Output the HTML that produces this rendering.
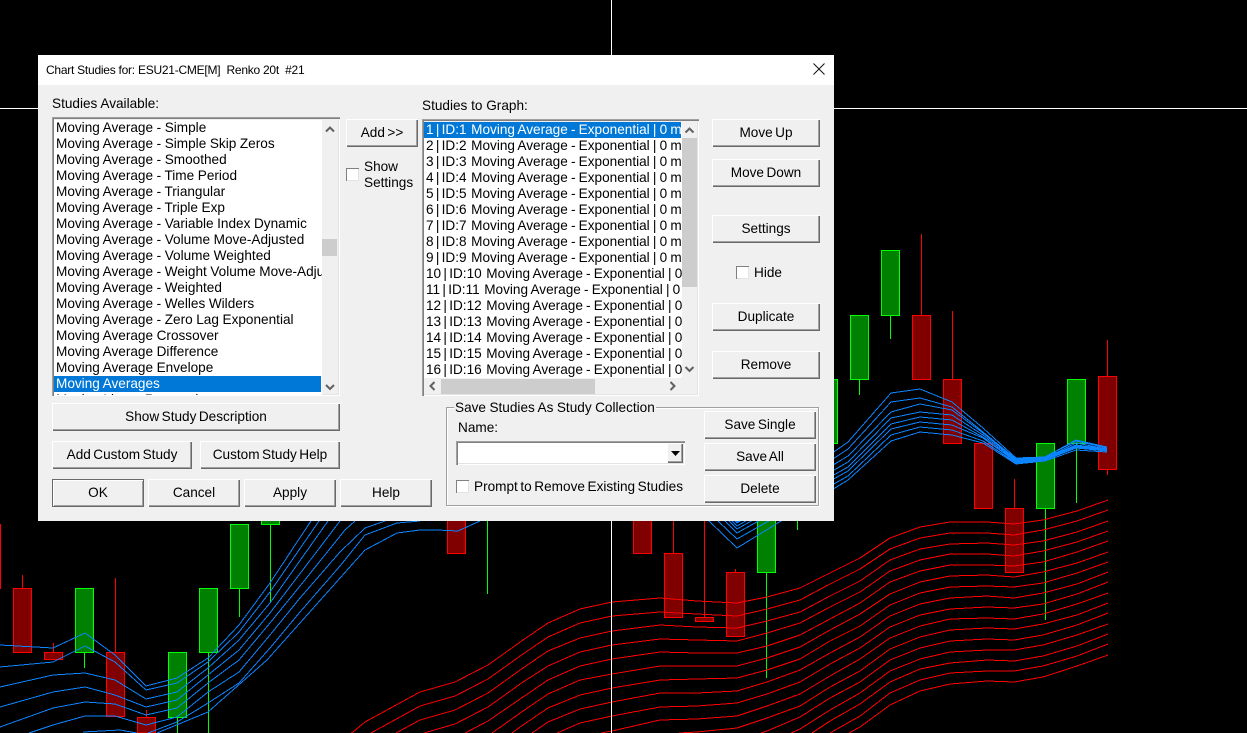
<!DOCTYPE html>
<html>
<head>
<meta charset="utf-8">
<title>Chart Studies</title>
<style>
html,body{margin:0;padding:0;background:#000;width:1247px;height:733px;overflow:hidden}
body{position:relative;font-family:"Liberation Sans",Arial,sans-serif;font-size:13.6px;color:#000}
svg{position:absolute;left:0;top:0}
#dlg{position:absolute;left:38px;top:55px;width:796px;height:466px;background:#f0f0f0}
#ttl{position:absolute;left:38px;top:55px;width:796px;height:30px;background:#fff}
.a{position:absolute;white-space:pre;line-height:16px}
.b{position:absolute;background:#f0f0f0;text-align:center;box-sizing:border-box;line-height:27px;white-space:pre;word-spacing:-1.3px;box-shadow:inset 1px 1px 0 #fff,inset -1px -1px 0 #696969,inset -2px -2px 0 #a0a0a0}
.d{box-shadow:inset 0 0 0 1px #696969,inset 2px 2px 0 #fff,inset -2px -2px 0 #a0a0a0}
.s{position:absolute;box-sizing:border-box;background:#f0f0f0;box-shadow:inset 1px 1px 0 #a0a0a0,inset 2px 2px 0 #808080,inset -1px -1px 0 #fff,inset -2px -2px 0 #e3e3e3}
.l{position:absolute;background:#fff;overflow:hidden}
.l div{height:16px;line-height:16px;white-space:pre;padding-left:2px;word-spacing:-.2px}
.l .x{background:#0078d7;color:#fff}
.m div{word-spacing:-.6px}
.m span{word-spacing:-1.5px}
.t{position:absolute;background:#cdcdcd}
.c{position:absolute;box-sizing:border-box;width:13px;height:13px;background:#fff;box-shadow:inset 1px 1px 0 #808080,inset -1px -1px 0 #e3e3e3}
#g{position:absolute;left:446px;top:407px;width:373px;height:99px;box-sizing:border-box;border:1px solid #a0a0a0;box-shadow:1px 1px 0 #fff,inset 1px 1px 0 #fff}
</style>
</head>
<body>
<svg id="chart" width="1247" height="733" viewBox="0 0 1247 733" shape-rendering="crispEdges" xmlns="http://www.w3.org/2000/svg">
<g fill="#800000" stroke="#ff0000">
<path fill="none" d="M.5 524V589M22.5 575V588M53.5 643V652M115.5 578V652M146.5 710V717M673.5 521V553M704.5 521V617M735.5 569V572M921.5 234V315M952.5 311V379M1014.5 479V508M1107.5 340V376M1107.5 469V475"/>
<rect x="13.5" y="588.5" width="18" height="64"/>
<rect x="44.5" y="652.5" width="18" height="7"/>
<rect x="106.5" y="652.5" width="18" height="64"/>
<path d="M137.5 733V717.5H155.5V733Z"/>
<rect x="447.5" y="500.5" width="18" height="53"/>
<rect x="633.5" y="500.5" width="18" height="53"/>
<rect x="664.5" y="553.5" width="18" height="64"/>
<rect x="695.5" y="617.5" width="18" height="4"/>
<rect x="726.5" y="572.5" width="18" height="64"/>
<rect x="912.5" y="315.5" width="18" height="64"/>
<rect x="943.5" y="379.5" width="18" height="64"/>
<rect x="974.5" y="443.5" width="18" height="65"/>
<rect x="1005.5" y="508.5" width="18" height="64"/>
<rect x="1098.5" y="376.5" width="18" height="93"/>
</g>
<g fill="#008000" stroke="#00ff00">
<path fill="none" d="M84.5 652V668M177.5 717V733M208.5 652V733M239.5 588V617M270.5 524V603M487.5 510V594M766.5 572V678M797.5 500V530M859.5 379V395M890.5 315V339M1045.5 508V620M1076.5 443V503"/>
<rect x="75.5" y="588.5" width="18" height="64"/>
<rect x="168.5" y="652.5" width="18" height="65"/>
<rect x="199.5" y="588.5" width="18" height="64"/>
<rect x="230.5" y="524.5" width="18" height="64"/>
<rect x="261.5" y="500.5" width="18" height="24"/>
<rect x="757.5" y="500.5" width="18" height="72"/>
<rect x="819.5" y="379.5" width="18" height="64"/>
<rect x="850.5" y="315.5" width="18" height="64"/>
<rect x="881.5" y="250.5" width="18" height="65"/>
<rect x="1036.5" y="443.5" width="18" height="65"/>
<rect x="1067.5" y="379.5" width="18" height="64"/>
</g>
<g id="red" fill="none" stroke="#ff0000"></g>
<g id="blue" fill="none" stroke="#0a84ff">
<polyline points="0,645 53,648 85,633 115,655 146,686 177,678 208,658 239,625 270,583 311,521"/>
<polyline points="0,667 53,662 85,646 115,662 146,690 177,683 208,662 239,632 270,592 319,521"/>
<polyline points="0,687 53,675 85,673 115,680 146,699 177,692 208,668 239,640 270,603 328,521"/>
<polyline points="0,707 53,692 85,687 115,695 146,707 177,700 208,675 239,650 270,613 340,521"/>
<polyline points="0,727 53,708 85,702 115,704 146,715 177,708 208,683 239,660 270,623 300,586 345,530 355,521"/>
<polyline points="29,733 53,725 85,716 115,716 146,725 177,717 208,692 239,672 270,635 300,598 340,552 365,528 385,521"/>
<polyline points="83,732 120,730 137,733"/>
<polyline points="148,733 177,722 208,703 239,683 270,648 300,612 340,566 365,535 397,523 420,521"/>
<polyline points="157,733 208,712 267,660 365,550 397,533 420,530 437,530 458,531 480,521"/>
</g>
<path d="M611.5 0V733M0 108.5H1247" stroke="#fff" fill="none"/>
</svg>
<script>
(function(){
var NS="http://www.w3.org/2000/svg";
function add(g,pts){var p=document.createElementNS(NS,"polyline");p.setAttribute("points",pts.map(function(a){return a[0]+","+a[1]}).join(" "));g.appendChild(p)}
function clip(pts){var o=[];for(var i=0;i<pts.length;i++){var c=pts[i];if(c[1]<=733){if(!o.length&&i>0){var q=pts[i-1];var t=(q[1]-733)/(q[1]-c[1]);o.push([Math.round(q[0]+(c[0]-q[0])*t),733])}o.push(c)}}return o}
var base=[[320,750],[353,732],[365,722],[420,692],[455,682],[488,665],[523,640],[548,623],[580,609],[612,602],[660,598],[697,601],[737,603],[767,597],[800,588],[830,573],[860,558],[890,538],[920,527],[950,522],[987,522],[1014,524],[1043,520],[1077,511],[1108,500]];
var sp=[[320,14],[420,14],[612,14.3],[737,12.5],[830,11.4],[1014,10.5],[1108,10.3]];
function spacing(x){for(var i=1;i<sp.length;i++){if(x<=sp[i][0]){var a=sp[i-1],b=sp[i];return a[1]+(b[1]-a[1])*(x-a[0])/(b[0]-a[0])}}return 10}
var r=document.getElementById("red");
for(var k=0;k<16;k++){var pl=clip(base.map(function(p){return [p[0],Math.round(p[1]+k*spacing(p[0]))]}));if(pl.length>1)add(r,pl)}
var xs=[737,848,891,920,952,983,1016,1045,1076,1107];
var ys=[[520,522,523,526,529,533,539,548],[442,449,456,462,467,471,476,480],[393,402,412,418,424,429,435,441],[389,398,404,412,417,422,427,432],[402,407,410,415,420,425,430,435],[428,432,433,435,437,438,441,443],[458,459,460,461,462,462,463,464],[457,457,458,458,459,459,460,461],[440,441,443,445,446,447,448,450],[447,448,449,449,450,450,451,452]];
var bl=document.getElementById("blue");
for(var j=0;j<8;j++){var pts=[[Math.round(737-(ys[0][j]-521)*1.04),521]];for(var i=0;i<xs.length;i++)pts.push([xs[i],ys[i][j]]);add(bl,pts)}
})();
</script>

<div id="dlg"></div>
<div id="ttl"></div>
<div class="a" style="left:46px;top:62px;font-size:12px;letter-spacing:-.25px">Chart Studies for: ESU21-CME[M]  Renko 20t  #21</div>

<div class="a" style="left:52px;top:96px">Studies Available:</div>
<div class="a" style="left:422px;top:98px">Studies to Graph:</div>

<div class="s" style="left:52px;top:117px;width:288px;height:279px"></div>
<div class="l" style="left:54px;top:120px;width:268px;height:275px">
<div>Moving Average - Simple</div>
<div>Moving Average - Simple Skip Zeros</div>
<div>Moving Average - Smoothed</div>
<div>Moving Average - Time Period</div>
<div>Moving Average - Triangular</div>
<div>Moving Average - Triple Exp</div>
<div>Moving Average - Variable Index Dynamic</div>
<div>Moving Average - Volume Move-Adjusted</div>
<div>Moving Average - Volume Weighted</div>
<div>Moving Average - Weight Volume Move-Adjusted</div>
<div>Moving Average - Weighted</div>
<div>Moving Average - Welles Wilders</div>
<div>Moving Average - Zero Lag Exponential</div>
<div>Moving Average Crossover</div>
<div>Moving Average Difference</div>
<div>Moving Average Envelope</div>
<div class="x" style="width:265px">Moving Averages</div>
<div>Moving Linear Regression</div>
</div>
<div class="t" style="left:322px;top:239px;width:15px;height:17px"></div>

<div class="s" style="left:422px;top:119px;width:277px;height:277px"></div>
<div class="l m" style="left:424px;top:122px;width:258px;height:256px">
<div class="x" style="width:255px"><span>1 | ID:1  </span>Moving Average - Exponential | 0 m</div>
<div><span>2 | ID:2  </span>Moving Average - Exponential | 0 m</div>
<div><span>3 | ID:3  </span>Moving Average - Exponential | 0 m</div>
<div><span>4 | ID:4  </span>Moving Average - Exponential | 0 m</div>
<div><span>5 | ID:5  </span>Moving Average - Exponential | 0 m</div>
<div><span>6 | ID:6  </span>Moving Average - Exponential | 0 m</div>
<div><span>7 | ID:7  </span>Moving Average - Exponential | 0 m</div>
<div><span>8 | ID:8  </span>Moving Average - Exponential | 0 m</div>
<div><span>9 | ID:9  </span>Moving Average - Exponential | 0 m</div>
<div><span>10 | ID:10  </span>Moving Average - Exponential | 0</div>
<div><span>11 | ID:11  </span>Moving Average - Exponential | 0</div>
<div><span>12 | ID:12  </span>Moving Average - Exponential | 0</div>
<div><span>13 | ID:13  </span>Moving Average - Exponential | 0</div>
<div><span>14 | ID:14  </span>Moving Average - Exponential | 0</div>
<div><span>15 | ID:15  </span>Moving Average - Exponential | 0</div>
<div><span>16 | ID:16  </span>Moving Average - Exponential | 0</div>
</div>
<div class="t" style="left:682px;top:138px;width:15px;height:149px"></div>
<div class="t" style="left:441px;top:379px;width:154px;height:15px"></div>

<div class="b" style="left:346px;top:119px;width:72px;height:28px">Add &gt;&gt;</div>
<div class="c" style="left:346px;top:168px"></div>
<div class="a" style="left:364px;top:159px">Show</div>
<div class="a" style="left:364px;top:175px">Settings</div>

<div class="b" style="left:712px;top:119px;width:108px;height:28px">Move Up</div>
<div class="b" style="left:712px;top:159px;width:108px;height:28px">Move Down</div>
<div class="b" style="left:712px;top:215px;width:108px;height:28px">Settings</div>
<div class="c" style="left:736px;top:266px"></div>
<div class="a" style="left:754px;top:265px">Hide</div>
<div class="b" style="left:712px;top:303px;width:108px;height:28px">Duplicate</div>
<div class="b" style="left:712px;top:351px;width:108px;height:28px">Remove</div>

<div class="b" style="left:52px;top:403px;width:288px;height:28px">Show Study Description</div>
<div class="b" style="left:52px;top:441px;width:140px;height:28px">Add Custom Study</div>
<div class="b" style="left:200px;top:441px;width:140px;height:28px">Custom Study Help</div>
<div class="b d" style="left:52px;top:479px;width:92px;height:28px">OK</div>
<div class="b" style="left:148px;top:479px;width:92px;height:28px">Cancel</div>
<div class="b" style="left:244px;top:479px;width:92px;height:28px">Apply</div>
<div class="b" style="left:340px;top:479px;width:92px;height:28px">Help</div>

<div id="g"></div>
<div class="a" style="left:454px;top:400px;background:#f0f0f0;padding:0 1px;word-spacing:-.3px">Save Studies As Study Collection</div>
<div class="a" style="left:458px;top:420px">Name:</div>
<div class="s" style="left:456px;top:441px;width:229px;height:24px;background:#fff"></div>
<div class="b" style="left:667px;top:443px;width:16px;height:20px"></div>
<div class="c" style="left:456px;top:480px"></div>
<div class="a" style="left:474px;top:479px;word-spacing:-1.2px">Prompt to Remove Existing Studies</div>
<div class="b" style="left:704px;top:411px;width:112px;height:28px">Save Single</div>
<div class="b" style="left:704px;top:443px;width:112px;height:28px">Save All</div>
<div class="b" style="left:704px;top:475px;width:112px;height:28px">Delete</div>

<svg width="1247" height="733" viewBox="0 0 1247 733" xmlns="http://www.w3.org/2000/svg">
<path d="M813.5 63.5L824.5 74.5M824.5 63.5L813.5 74.5" stroke="#111" stroke-width="1" fill="none"/>
<g fill="none" stroke="#606060" stroke-width="2">
<path d="M326 131.5L330 127.5L334 131.5"/>
<path d="M326 385L330 389L334 385"/>
<path d="M685.5 132.5L689.5 128.5L693.5 132.5"/>
<path d="M685.5 367L689.5 371L693.5 367"/>
<path d="M434.5 382L430.5 386L434.5 390"/>
<path d="M670.5 382L674.5 386L670.5 390"/>
</g>
<path d="M671 451H680L675.5 456Z" fill="#000"/>
</svg>
</body>
</html>
